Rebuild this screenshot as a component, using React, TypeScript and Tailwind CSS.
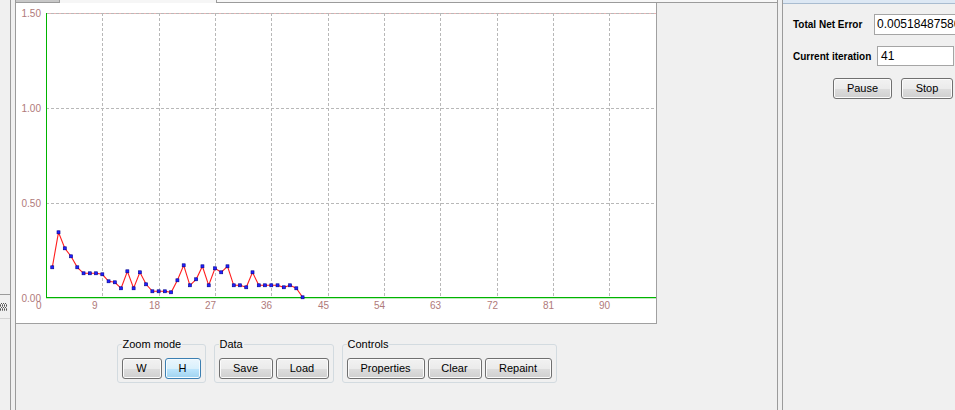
import React from "react";

// y pixel of each iteration's error (iterations 1..41)
const errY = [
  267.3, 232.3, 248.3, 256.3, 267.3, 273.3, 273.3, 273.3, 274.3, 281.3, 282.3, 288.3, 271.3, 288.3,
  272.3, 284.3, 291.3, 291.3, 291.3, 292.3, 280.3, 265.3, 285.3, 279.3, 266.3, 285.3, 268.3, 272.3,
  266.3, 285.3, 285.3, 287.3, 272.3, 285.3, 285.3, 285.3, 285.3, 287.3, 285.3, 288.3, 297.3,
];

const px = (i: number) => 46 + 6.258 * i;
const gridX = Array.from({ length: 12 }, (_, k) => Math.round(46 + 56.32 * k) + 0.5);

const labelColor = "#b07a7a";

function Chart() {
  const pts = errY.map((y, i) => `${px(i + 1).toFixed(1)},${y}`).join(" ");
  return (
    <svg width={640} height={320} viewBox="16 3 640 320" className="block">
      {/* grid */}
      <line x1={46} x2={656} y1={13.5} y2={13.5} stroke="#e8b4b4" />
      {[13.5, 108.5, 203.5].map((y) => (
        <line key={y} x1={46} x2={656} y1={y} y2={y} stroke="#b8b8b8" strokeDasharray="3 2" />
      ))}
      {gridX.slice(1, 11).map((x) => (
        <line key={x} x1={x} x2={x} y1={13} y2={297} stroke="#b8b8b8" strokeDasharray="3 2" />
      ))}

      {/* axes */}
      <line x1={46.5} x2={46.5} y1={13} y2={298} stroke="#00b400" />
      <line x1={46} x2={656} y1={297.6} y2={297.6} stroke="#00b400" strokeWidth={1.2} />

      {/* y labels */}
      {[
        ["1.50", 16.5],
        ["1.00", 112],
        ["0.50", 207.2],
        ["0.00", 301.5],
      ].map(([t, y]) => (
        <text
          key={t as string}
          x={41}
          y={y as number}
          textAnchor="end"
          fontSize={10}
          fontFamily="Liberation Sans, Arial, sans-serif"
          fill={labelColor}
        >
          {t}
        </text>
      ))}

      {/* x labels */}
      {gridX.map((x, k) => (
        <text
          key={k}
          x={x - 10.5}
          y={309}
          fontSize={10}
          fontFamily="Liberation Sans, Arial, sans-serif"
          fill={labelColor}
        >
          {k * 9}
        </text>
      ))}

      {/* error series */}
      <polyline points={pts} fill="none" stroke="#ff1e1e" strokeWidth={1.1} />
      {errY.map((y, i) => (
        <rect
          key={i}
          x={px(i + 1) - 1.5}
          y={y - 1.5}
          width={3}
          height={3}
          fill="#2020ff"
          stroke="#00008a"
          strokeWidth={0.6}
        />
      ))}
    </svg>
  );
}

const btn =
  "flex h-[21px] shrink-0 items-center justify-center rounded-[3px] border text-[11px] leading-none text-black";
const btnNormal =
  "border-[#707070] bg-[linear-gradient(#f2f2f2_0%,#ebebeb_50%,#dddddd_51%,#cfcfcf_100%)] shadow-[inset_0_0_0_1px_#fbfbfb]";
const btnHot =
  "border-[#3c7fb1] bg-[linear-gradient(#eaf6fd_0%,#d9f0fc_50%,#bee6fd_51%,#9fd3f0_100%)] shadow-[inset_0_0_0_1px_#f4fbff]";

function Group({ title, children }: { title: string; children: React.ReactNode }) {
  return (
    <fieldset className="flex gap-[3px] rounded-[3px] border border-[#d3dbe0] px-[4px] pb-[3px] pt-[7px]">
      <legend className="px-[1px] text-[11px] leading-[13px]">{title}</legend>
      {children}
    </fieldset>
  );
}

export default function App() {
  return (
    <div className="flex h-[410px] w-[955px] overflow-hidden bg-[#f0f0f0] font-['Liberation_Sans',Arial,sans-serif] text-black">
      {/* collapsed dock on the left */}
      <div className="flex w-[11px] shrink-0 flex-col border-r border-[#9b9b9b]">
        <div className="h-[295px] border-b border-[#9b9b9b]" />
        <div className="flex h-[24px] items-center border-b border-[#d4d4d4]">
          <svg width={7} height={8} viewBox="0 0 7 8">
            {[0, 2, 4, 6].map((y) =>
              [0, 2, 4, 6].map((x) => (
                <rect key={`${x}-${y}`} x={x + (y % 4 === 0 ? 0 : 1) - 1} y={y} width={1} height={1} fill="#555" />
              )),
            )}
            {[1, 3, 5, 7].map((y) =>
              [0, 2, 4, 6].map((x) => (
                <rect key={`b${x}-${y}`} x={x} y={y} width={1} height={1} fill="#888" />
              )),
            )}
          </svg>
        </div>
      </div>
      <div className="w-[4px] shrink-0" />

      {/* main tab panel */}
      <div className="flex w-[763px] shrink-0 flex-col border-x border-[#9b9b9b]">
        <div className="flex h-[3px]">
          <div className="w-[44px] border-r border-b border-[#9b9b9b] bg-[#c8c8c8]" />
          <div className="w-[157px] border-r border-[#9b9b9b] bg-[#f6f6f6]" />
          <div className="flex-1 border-b border-[#9b9b9b] bg-[#f7f7f7]" />
        </div>
        <div className="flex flex-1">
          <div className="flex w-[641px] shrink-0 flex-col">
            <div className="h-[321px] border-r border-b border-[#a0a0a0] bg-white">
              <Chart />
            </div>
            <div className="flex justify-center gap-[8px] pt-[14px]">
              <Group title="Zoom mode">
                <button className={`${btn} ${btnNormal} w-[40px]`}>W</button>
                <button className={`${btn} ${btnHot} w-[36px]`}>H</button>
              </Group>
              <Group title="Data">
                <button className={`${btn} ${btnNormal} w-[54px]`}>Save</button>
                <button className={`${btn} ${btnNormal} w-[53px]`}>Load</button>
              </Group>
              <Group title="Controls">
                <button className={`${btn} ${btnNormal} w-[78px]`}>Properties</button>
                <button className={`${btn} ${btnNormal} w-[54px]`}>Clear</button>
                <button className={`${btn} ${btnNormal} w-[67px]`}>Repaint</button>
              </Group>
            </div>
          </div>
          <div className="flex-1" />
        </div>
      </div>
      <div className="w-[4px] shrink-0" />

      {/* training status panel */}
      <div className="flex min-w-0 flex-1 flex-col overflow-hidden border-l border-[#9b9b9b]">
        <div className="h-[4px] border-b border-[#a9bcd0] bg-[#dde8f4]" />
        <div className="flex flex-col pl-[10px] pt-[10px]">
          <div className="flex h-[21px] items-center">
            <span className="w-[81px] shrink-0 text-[10px] font-bold">Total Net Error</span>
            <div className="h-[21px] w-[90px] shrink-0 overflow-hidden whitespace-nowrap border border-[#a5a5a5] bg-white pl-[2px] text-[12px] leading-[19px]">
              0.005184875863
            </div>
          </div>
          <div className="mt-[11px] flex h-[20px] items-center">
            <span className="w-[84px] shrink-0 whitespace-nowrap text-[10px] font-bold">Current iteration</span>
            <div className="h-[20px] w-[77px] shrink-0 border border-[#a5a5a5] bg-white pl-[3px] text-[12px] leading-[18px]">
              41
            </div>
          </div>
          <div className="mt-[12px] flex gap-[9px] pl-[40px]">
            <button className={`${btn} ${btnNormal} w-[59px]`}>Pause</button>
            <button className={`${btn} ${btnNormal} w-[52px]`}>Stop</button>
          </div>
        </div>
      </div>
    </div>
  );
}
